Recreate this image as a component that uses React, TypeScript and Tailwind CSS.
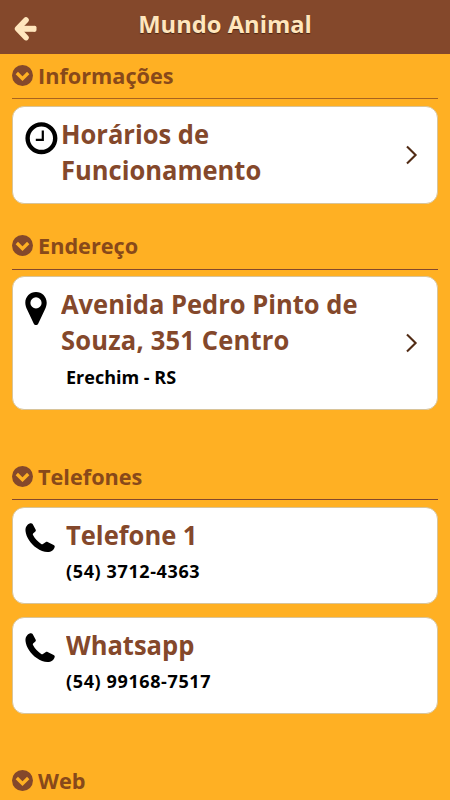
import type { ReactNode } from "react";

function ArrowLeftIcon() {
  return (
    <svg width="24" height="26" viewBox="0 0 24 26" fill="none" stroke="#ffe6bd">
      <path d="M5 12.8H20.5" strokeWidth="6" />
      <path d="M20.7 11.5v2.600" strokeWidth="3.600" strokeLinecap="round" />
      <path d="M12 4L3.600 12.800l8.400 8.800" strokeLinecap="round" strokeLinejoin="round" strokeWidth="5.600" />
    </svg>
  );
}

function ChevronCircleIcon() {
  return (
    <svg width="21" height="21" viewBox="0 0 21 21" fill="none" className="shrink-0">
      <circle cx="10.5" cy="10.5" r="10.5" fill="#84482b" />
      <path d="M4.800 8l5.700 5.700L16.200 8" stroke="#ffb023" strokeWidth="3.300" />
    </svg>
  );
}

function ClockIcon() {
  return (
    <svg width="33" height="33" viewBox="0 0 33 33" fill="none" stroke="#000" className="shrink-0">
      <circle cx="16.4" cy="16.2" r="13.8" strokeWidth="4.4" />
      <path d="M17.8 8.500v9.300h-7" strokeWidth="2.200" />
    </svg>
  );
}

function PinIcon() {
  return (
    <svg width="22" height="34" viewBox="0 0 22 34" className="shrink-0">
      <path
        fill="#000"
        fillRule="evenodd"
        d="M11 0C5 0 .3 4.700 .3 10.700c0 2.600.8 4.600 1.800 6.700l6.600 14c.5 1 1.300 1.500 2.300 1.500s1.800-.5 2.300-1.500l6.600-14c1-2.100 1.800-4.100 1.800-6.700C21.700 4.700 17 0 11 0zM11 5.300a5.600 5.600 0 1 1 0 11.200a5.600 5.600 0 0 1 0-11.200z"
      />
    </svg>
  );
}

function PhoneIcon() {
  return (
    <svg width="30" height="30" viewBox="0 0 30 30" className="shrink-0">
      <path
        fill="#000"
        d="M2.200 2.200C3.500.9 5.200.2 6.600.4c.7.1 1 .4 1.300 1l2.800 5.400c.3.700.2 1.300-.3 1.800L8.100 10.600c-.4.400-.4.900-.1 1.500c2 3.700 4.700 6.600 8.200 8.800c.6.400 1.200.4 1.700 0l3-2c.5-.3 1.100-.3 1.700 0l6 3.100c1 .5 1.300 1.100 1.100 2c-.5 2.300-2.300 4-4.600 4.700c-4 1.100-9-.5-13.400-3.700C5.700 20.700 1.100 14 .5 7.900C.3 5.700.8 3.600 2.200 2.200z"
      />
    </svg>
  );
}

function ChevronRightIcon() {
  return (
    <svg width="13" height="20" viewBox="0 0 13 20" fill="none" className="shrink-0">
      <path d="M2 1.500L10.600 10L2 18.500" stroke="#512b14" strokeWidth="2.100" />
    </svg>
  );
}

function SectionHeading({ children, height = "h-[46px]", line = "border-[#84482b]" }: { children: ReactNode; height?: string; line?: string }) {
  return (
    <div className={`flex items-start border-b ${height} ${line}`}>
      <div className="flex h-[43px] items-center gap-[5px]">
        <ChevronCircleIcon />
        <h2 className="origin-left scale-x-[0.985] text-[22px] leading-[43px] font-bold text-[#88491a]">{children}</h2>
      </div>
    </div>
  );
}

function Card({ icon, children, arrow }: { icon: ReactNode; children: ReactNode; arrow?: boolean }) {
  return (
    <div className="flex items-center rounded-[12px] border border-[#d8c49a] bg-white pr-[19px] pl-[12px]">
      <div className="w-[36px] shrink-0 self-start pt-[15px]">{icon}</div>
      <div className="flex-1 self-start pt-[9px] whitespace-nowrap">{children}</div>
      {arrow && <ChevronRightIcon />}
    </div>
  );
}

const titleClass = "origin-left text-[27px] leading-[36px] font-bold text-[#84482b]";
const phones = [
  { label: "Telefone 1", number: "(54) 3712-4363" },
  { label: "Whatsapp", number: "(54) 99168-7517" },
];

export default function App() {
  return (
    <div className="h-[800px] w-full overflow-hidden bg-[#ffb023] font-['Open_Sans','Noto_Sans',sans-serif]">
      <header className="grid h-[54px] grid-cols-[60px_1fr_60px] items-start bg-[#84482b]">
        <button className="pt-[16px] pl-[14px]" aria-label="Voltar">
          <ArrowLeftIcon />
        </button>
        <h1 className="scale-x-[0.99] text-center text-[24px] leading-[47px] font-bold text-[#ffe6bd] [text-shadow:0_1px_1px_#4a2412]">
          Mundo Animal
        </h1>
      </header>
      <main className="px-[12px]">
        <section className="h-[170px]">
          <SectionHeading height="h-[45px]" line="border-[#a8631f]">Informações</SectionHeading>
          <div className="mt-[7px] grid h-[98px]">
            <Card icon={<ClockIcon />} arrow>
              <p className={`${titleClass} scale-x-[0.945]`}>Horários de<br />Funcionamento</p>
            </Card>
          </div>
        </section>
        <section className="h-[231px]">
          <SectionHeading>Endereço</SectionHeading>
          <div className="mt-[6px] grid h-[134px]">
            <Card icon={<PinIcon />} arrow>
              <p className={`${titleClass} scale-x-[0.945]`}>
                Avenida Pedro Pinto de<br />
                <span className="tracking-[0.2px]">Souza, 351 Centro</span>
              </p>
              <p className="mt-px pl-[5px] text-[18px] leading-[36px] font-bold text-black">Erechim - RS</p>
            </Card>
          </div>
        </section>
        <section className="h-[304px]">
          <SectionHeading height="h-[45px]">Telefones</SectionHeading>
          <div className="mt-[7px] grid grid-rows-[97px_97px] gap-[13px]">
            {phones.map((phone) => (
              <Card key={phone.label} icon={<PhoneIcon />}>
                <div className="pl-[5px]">
                  <p className={`${titleClass} scale-x-[0.945]`}>{phone.label}</p>
                  <p className="text-[18px] leading-[36px] font-bold tracking-[0.62px] text-black">{phone.number}</p>
                </div>
              </Card>
            ))}
          </div>
        </section>
        <section>
          <SectionHeading>Web</SectionHeading>
        </section>
      </main>
    </div>
  );
}
